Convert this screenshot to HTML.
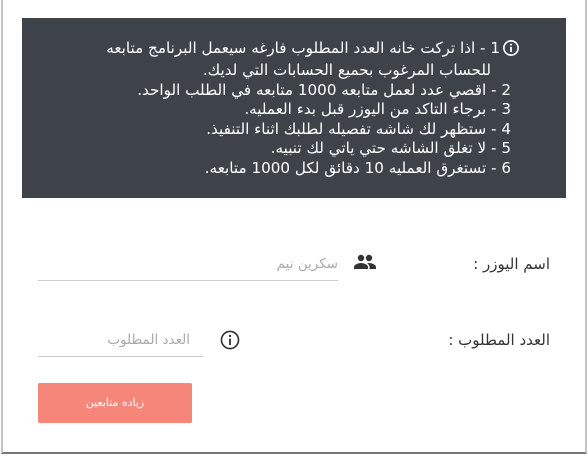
<!DOCTYPE html>
<html><head><meta charset="utf-8"><style>
html,body{margin:0;padding:0;background:#fff;width:588px;height:459px;overflow:hidden;position:relative;font-family:"DejaVu Sans","Liberation Sans",sans-serif;}
.frame{position:absolute;left:1px;top:-2px;width:582px;height:454px;border:2px solid #c4c4c4;border-bottom-color:#777;border-top:none;}
.box{position:absolute;left:22px;top:18px;width:544px;height:180px;background:#3d4349;}
.l{position:absolute;right:77px;direction:rtl;color:#fff;font-size:15.2px;white-space:nowrap;line-height:18px;}
.lab{position:absolute;direction:rtl;color:#333;font-size:15px;white-space:nowrap;}
.ph{position:absolute;direction:rtl;color:#aaa;font-size:13.5px;white-space:nowrap;}
.line{position:absolute;height:1px;background:#ccc;}
.btn{position:absolute;left:38px;top:383px;width:154px;height:40px;background:#f7867a;border-radius:2px;color:#fff;font-size:11px;text-align:center;line-height:40px;direction:rtl;}
</style></head><body>
<div class="frame"></div>
<div class="box"></div>
<svg style="position:absolute;left:502px;top:39px" width="18" height="18" viewBox="0 0 24 24"><circle cx="12" cy="12" r="9.5" fill="none" stroke="#fff" stroke-width="2.2"/><rect x="10.8" y="10.5" width="2.4" height="7" fill="#fff"/><circle cx="12" cy="7.5" r="1.4" fill="#fff"/></svg>
<div class="l" style="top:39px;right:88px">1 - اذا تركت خانه العدد المطلوب فارغه سيعمل البرنامج متابعه</div>
<div class="l" style="top:61px;right:97px">للحساب المرغوب بحميع الحسابات التي لديك.</div>
<div class="l" style="top:81px">2 - اقصي عدد لعمل متابعه 1000 متابعه في الطلب الواحد.</div>
<div class="l" style="top:100px">3 - برجاء التاكد من اليوزر قبل بدء العمليه.</div>
<div class="l" style="top:120px">4 - ستظهر لك شاشه تفصيله لطلبك اثناء التنفيذ.</div>
<div class="l" style="top:139px">5 - لا تغلق الشاشه حتي ياتي لك تنبيه.</div>
<div class="l" style="top:159px">6 - تستغرق العمليه 10 دقائق لكل 1000 متابعه.</div>

<div class="lab" style="right:38px;top:255px">اسم اليوزر :</div>
<svg style="position:absolute;left:353px;top:252px" width="24" height="20" viewBox="0 0 24 20"><circle cx="8" cy="6" r="3.2" fill="#333"/><circle cx="16" cy="6" r="3.2" fill="#333"/><path d="M1 17v-2c0-2.5 4.5-4 7-4s7 1.5 7 4v2z" fill="#333"/><path d="M14 11.3c.7-.2 1.4-.3 2-.3 2.5 0 7 1.5 7 4v2h-6.5v-2c0-1.5-1-2.8-2.5-3.7z" fill="#333"/></svg>
<div class="ph" style="right:250px;top:256px">سكرين نيم</div>
<div class="line" style="left:38px;top:280px;width:300px"></div>

<div class="lab" style="right:38px;top:331px">العدد المطلوب :</div>
<svg style="position:absolute;left:219px;top:329px" width="22" height="22" viewBox="0 0 24 24"><circle cx="12" cy="12" r="9.3" fill="none" stroke="#333" stroke-width="1.8"/><rect x="11" y="10.5" width="2" height="7" fill="#333"/><circle cx="12" cy="7.6" r="1.3" fill="#333"/></svg>
<div class="ph" style="right:398px;top:332px">العدد المطلوب</div>
<div class="line" style="left:38px;top:356px;width:165px"></div>

<div class="btn">زياده متابعين</div>
</body></html>
